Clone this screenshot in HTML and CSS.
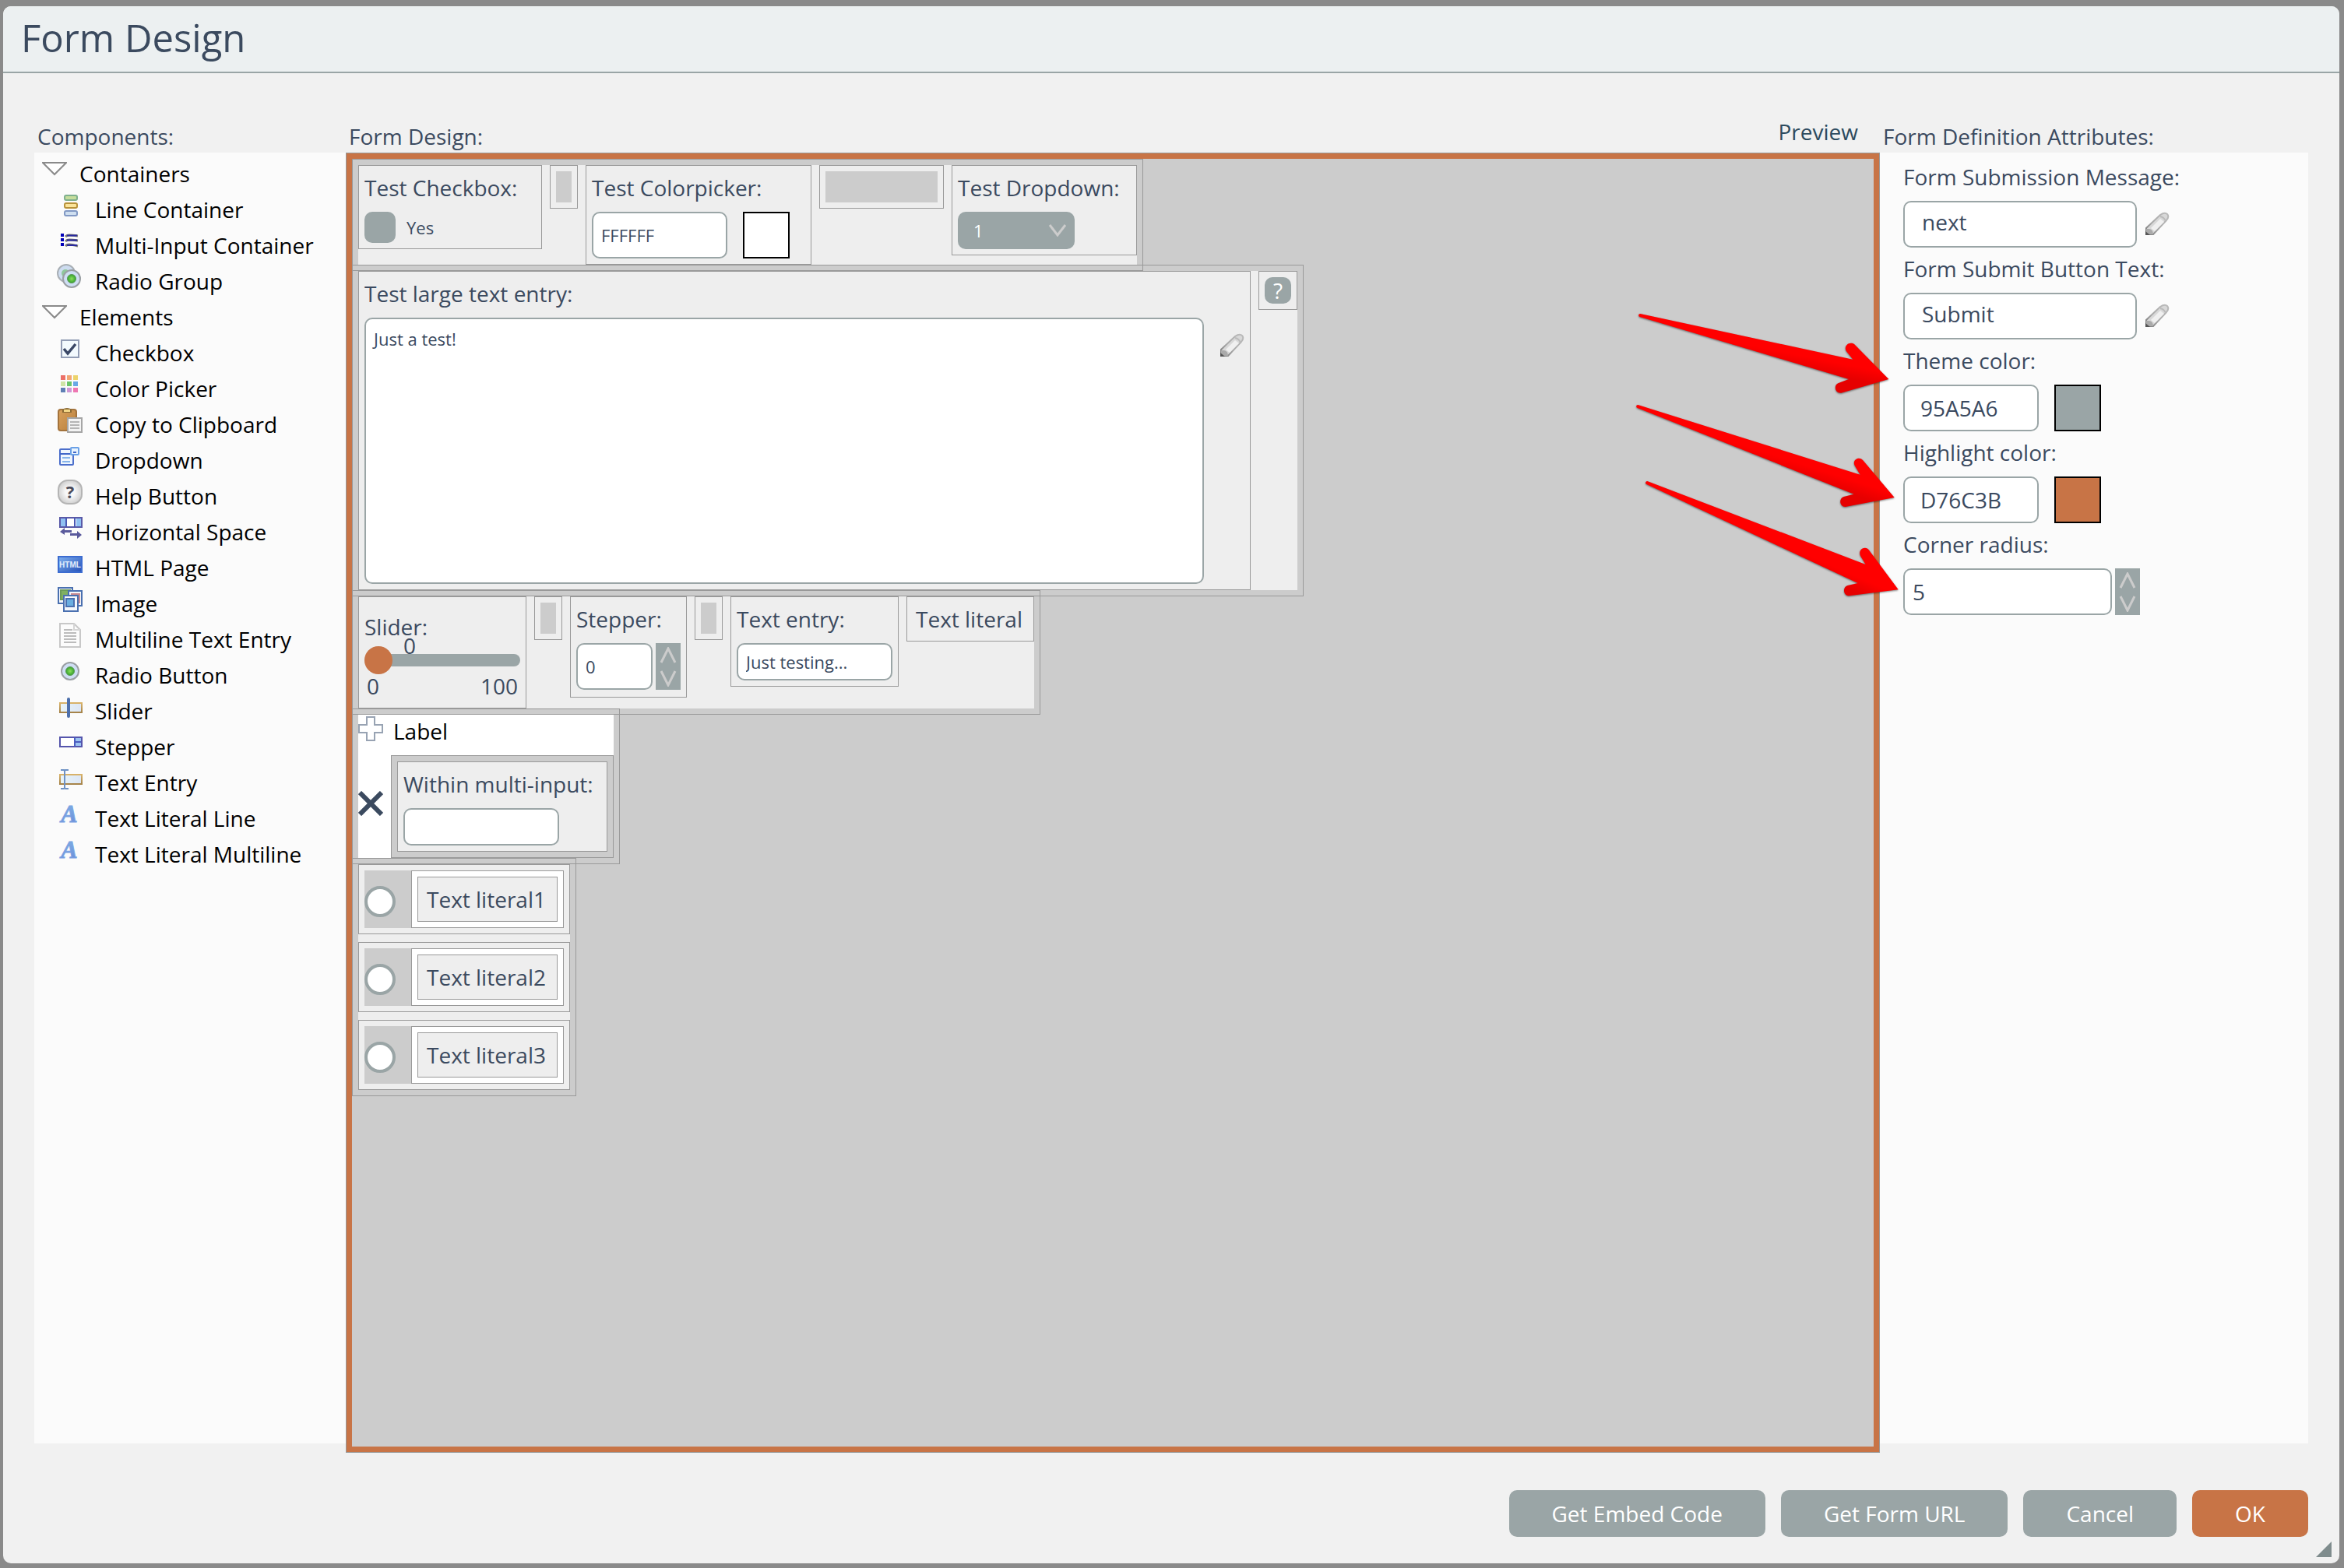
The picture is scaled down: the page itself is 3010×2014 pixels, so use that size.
FILE: index.html
```html
<!DOCTYPE html>
<html lang="en">
<head>
<meta charset="utf-8">
<title>Form Design</title>
<link rel="stylesheet" href="styles.css">
</head>
<body>
<svg class="defs" aria-hidden="true">
  <defs>
    <linearGradient id="tan" x1="0" y1="0" x2="0" y2="1"><stop offset="0" stop-color="#d9b36a"/><stop offset="1" stop-color="#a5834a"/></linearGradient>
    <linearGradient id="ice" x1="0" y1="0" x2="1" y2="0"><stop offset="0" stop-color="#e8f4f8"/><stop offset="1" stop-color="#dce6f6"/></linearGradient>
    <linearGradient id="letter" x1="0" y1="0" x2="0" y2="1"><stop offset="0" stop-color="#7fb4e6"/><stop offset="1" stop-color="#6a8ad8"/></linearGradient>
    <linearGradient id="graphite" x1="0" y1="1" x2="1" y2="0"><stop offset="0" stop-color="#777"/><stop offset="0.4" stop-color="#aaa"/><stop offset="1" stop-color="#bbb"/></linearGradient>
    <linearGradient id="wood" x1="0" y1="0" x2="1" y2="1"><stop offset="0" stop-color="#d9a15c"/><stop offset="1" stop-color="#b87f3c"/></linearGradient>
    <linearGradient id="page" x1="0" y1="0" x2="1" y2="1"><stop offset="0" stop-color="#7fb0ee"/><stop offset="1" stop-color="#2450b8"/></linearGradient>
    <radialGradient id="green"><stop offset="0" stop-color="#8be05c"/><stop offset="1" stop-color="#35a02c"/></radialGradient>
    <radialGradient id="silver"><stop offset="0.4" stop-color="#f8f8f8"/><stop offset="1" stop-color="#d2d2d2"/></radialGradient>
    <symbol id="caret" viewBox="0 0 32 20"><path d="M1 2H31L16 17Z" fill="#fff" stroke="#8a8a8a" stroke-width="2"/></symbol>
    <symbol id="pencil" viewBox="0 0 32 32">
      <path d="M2 29V21L20 4Q26 0 29 3T28 11L11 29Z" fill="#d8d8d8" stroke="url(#graphite)" stroke-width="2"/>
      <path d="M8 21L20 9L25 13L13 25Z" fill="#f0f0f0"/>
      <path d="M2 29V22L6 22Q11 23 11 29Z" fill="#aaa"/><path d="M1 30V25L7 30Z" fill="#555"/>
      <path d="M20 6Q25 7 27 12" fill="none" stroke="#bbb" stroke-width="2"/>
    </symbol>
    <symbol id="up" viewBox="0 0 22 21"><path d="M2 20L11 2L20 20" fill="none" stroke="#ccc" stroke-width="3"/></symbol>
    <symbol id="down" viewBox="0 0 22 21"><path d="M2 1L11 19L20 1" fill="none" stroke="#ccc" stroke-width="3"/></symbol>
  </defs>
</svg>

<main class="dialog">
  <header class="titlebar"><h1>Form Design</h1></header>

  <div class="columns">
    <section class="side">
      <h2 class="heading">Components:</h2>
      <ul class="tree">
        <li class="group"><svg class="caret"><use href="#caret"/></svg>Containers</li>
        <li><svg class="icon" viewBox="0 0 32 32"><g stroke-width="2"><rect x="9" y="3" width="16" height="6" rx="2" fill="#c5dd9c" stroke="#7fb08e"/><rect x="9" y="13" width="16" height="6" rx="2" fill="#fbe49a" stroke="#b8923a"/><rect x="9" y="23" width="16" height="6" rx="2" fill="#cfdff0" stroke="#8299c4"/></g></svg>Line Container</li>
        <li><svg class="icon" viewBox="0 0 32 32"><path d="M4 6h4v4h-4zM4 12h4v4h-4zM4 18h4v4h-4z" fill="#0000b8"/><path d="M10 10Q12 8 15 8T26 9M10 16Q12 14 15 14T26 15M10 22Q12 20 15 20T26 22" fill="none" stroke="#777" stroke-width="3"/><path d="M12 8.5H25M12 14.5H25M12 21H25" stroke="#2a2aa0" stroke-width="2"/></svg>Multi-Input Container</li>
        <li><svg class="icon" viewBox="0 0 32 32"><circle cx="11" cy="11" r="11" fill="#cddcf0" stroke="#a9afb5" stroke-width="2"/><circle cx="10" cy="11" r="5" fill="#8fc79b"/><circle cx="18" cy="18" r="11" fill="#cfdef4" stroke="#9a9fa3" stroke-width="2"/><circle cx="18" cy="18" r="5.5" fill="url(#green)" stroke="#5a9a58"/></svg>Radio Group</li>
        <li class="group"><svg class="caret"><use href="#caret"/></svg>Elements</li>
        <li><svg class="icon" viewBox="0 0 32 32"><rect x="5" y="5" width="22" height="22" fill="#f3fafe" stroke="#929db5" stroke-width="2"/><path d="M8 16L13 22L23 10" fill="none" stroke="#3a4766" stroke-width="3.5"/></svg>Checkbox</li>
        <li><svg class="icon" viewBox="0 0 32 32"><path d="M4 4h6v6h-6z" fill="#ec7068"/><path d="M12 4h6v6h-6z" fill="#f2a673"/><path d="M20 4h6v6h-6z" fill="#ecd36c"/><path d="M4 12h6v6h-6z" fill="#cfe4a6"/><path d="M12 12h6v6h-6z" fill="#6cc46a"/><path d="M20 12h6v6h-6z" fill="#68a8e6"/><path d="M4 20h6v6h-6z" fill="#5f7fb4"/><path d="M12 20h6v6h-6z" fill="#cf98d6"/><path d="M20 20h6v6h-6z" fill="#ee77b2"/></svg>Color Picker</li>
        <li><svg class="icon" viewBox="0 0 32 32"><rect x="1" y="2" width="23" height="27" rx="3" fill="url(#wood)" stroke="#a3733c" stroke-width="2"/><path d="M6 6V2Q12 -2 18 2V6Z" fill="#8a6a34"/><rect x="8" y="2" width="8" height="3" fill="#f5d98a"/><rect x="13" y="13" width="18" height="18" fill="#f3f3f3" stroke="#a5a5a5" stroke-width="2"/><path d="M16 18H28M16 22H28M16 26H28" stroke="#b5b5b5" stroke-width="2"/></svg>Copy to Clipboard</li>
        <li><svg class="icon" viewBox="0 0 32 32"><rect x="3" y="7" width="17" height="20" rx="1" fill="#eef5fd" stroke="#4c6fcb" stroke-width="2"/><path d="M3 13H20" stroke="#3f66c9" stroke-width="2"/><path d="M6 18H16M6 23H16" stroke="#86b4ea" stroke-width="2"/><rect x="17" y="5" width="10" height="9" rx="1" fill="#e8f3fd" stroke="#6aa0e6" stroke-width="2"/><path d="M20 11H24" stroke="#3f66c9" stroke-width="2"/></svg>Dropdown</li>
        <li><svg class="icon" viewBox="0 0 32 32"><rect x="1" y="1" width="30" height="30" rx="12" fill="url(#silver)" stroke="#b4b4b4" stroke-width="2"/><text x="16" y="24" text-anchor="middle" class="glyph-help">?</text></svg>Help Button</li>
        <li><svg class="icon" viewBox="0 0 32 32"><rect x="3" y="3" width="28" height="12" fill="#fff" stroke="#5a5aa8" stroke-width="2"/><path d="M4 4h6v10h-6zM24 4h6v10h-6z" fill="#8fc0f2"/><path d="M11 3V15M22 3V15" stroke="#4a58b4" stroke-width="2"/><path d="M3 21L9 16V19H18V22H9V25ZM31 25L25 20V23H16V26H25V30Z" fill="#5a5a9c"/></svg>Horizontal Space</li>
        <li><svg class="icon" viewBox="0 0 32 32"><rect x="1" y="7" width="30" height="20" fill="url(#page)" stroke="#3c6cd0" stroke-width="2"/><text x="16" y="21" text-anchor="middle" class="glyph-html">HTML</text></svg>HTML Page</li>
        <li><svg class="icon" viewBox="0 0 32 32"><g stroke-width="2" fill="#f4f7fb" stroke="#4a70b0"><rect x="1" y="1" width="18" height="20"/><rect x="4" y="4" width="12" height="12" fill="#7fb062" stroke="#6a9a58"/><rect x="14" y="5" width="17" height="19"/><rect x="18" y="9" width="10" height="11" fill="#e07a72" stroke="#c98a90"/><rect x="8" y="11" width="18" height="20"/><rect x="11" y="15" width="10" height="10" fill="#6aaee0"/></g></svg>Image</li>
        <li><svg class="icon" viewBox="0 0 32 32"><path d="M3 1H21L29 9V31H3Z" fill="#fcfcfc" stroke="#c8c8c8" stroke-width="2"/><path d="M21 1V9H29" fill="none" stroke="#d5d5d5" stroke-width="2"/><path d="M8 9H19M8 13H24M8 17H24M8 21H24M8 25H24" stroke="#bcbcbc" stroke-width="2"/></svg>Multiline Text Entry</li>
        <li><svg class="icon" viewBox="0 0 32 32"><circle cx="16" cy="16" r="11" fill="#cfdef4" stroke="#9a9fa3" stroke-width="2"/><circle cx="16" cy="16" r="5.5" fill="url(#green)" stroke="#5a9a58"/></svg>Radio Button</li>
        <li><svg class="icon" viewBox="0 0 32 32"><rect x="3" y="11" width="28" height="12" fill="url(#ice)" stroke="url(#tan)" stroke-width="2"/><rect x="12" y="4" width="4" height="26" rx="2" fill="#4d70ac"/></svg>Slider</li>
        <li><svg class="icon" viewBox="0 0 32 32"><rect x="3" y="9" width="28" height="12" fill="#fff" stroke="#5555ac" stroke-width="2"/><rect x="22" y="10" width="8" height="10" fill="#9cc2f0"/><path d="M22 9V21M22 15H30" stroke="#4c5cc0" stroke-width="2"/></svg>Stepper</li>
        <li><svg class="icon" viewBox="0 0 32 32"><rect x="3" y="11" width="28" height="12" fill="url(#ice)" stroke="url(#tan)" stroke-width="2"/><path d="M4 5H8L9 6L10 5H14M9 6V28M4 29H8L9 28L10 29H14" fill="none" stroke="#6f92c4" stroke-width="2"/></svg>Text Entry</li>
        <li><svg class="icon" viewBox="0 0 32 32"><text x="15" y="26" text-anchor="middle" class="glyph-letter">A</text></svg>Text Literal Line</li>
        <li><svg class="icon" viewBox="0 0 32 32"><text x="15" y="26" text-anchor="middle" class="glyph-letter">A</text></svg>Text Literal Multiline</li>
      </ul>
    </section>

    <section class="workspace">
      <div class="workspace-head">
        <h2 class="heading">Form Design:</h2>
        <a class="preview" href="#preview">Preview</a>
      </div>
      <div class="canvas">
        <div class="row"><div class="line">
          <div class="item w-checkbox">
            <span class="label">Test Checkbox:</span>
            <label class="check"><input type="checkbox">Yes</label>
          </div>
          <div class="item"><div class="space"></div></div>
          <div class="item w-color">
            <label class="label" for="color">Test Colorpicker:</label>
            <div class="color"><input id="color" class="box small tall" value="FFFFFF"><button class="swatch white" aria-label="Pick color"></button></div>
          </div>
          <div class="item"><div class="space wide"></div></div>
          <div class="item w-dropdown">
            <label class="label" for="drop">Test Dropdown:</label>
            <div class="drop"><select id="drop"><option>1</option></select><svg viewBox="0 0 24 16"><path d="M2 1L12 14L22 1" fill="none" stroke="#ccc" stroke-width="3"/></svg></div>
          </div>
        </div></div>

        <div class="row"><div class="line">
          <div class="item w-large">
            <label class="label" for="large">Test large text entry:</label>
            <div class="large"><textarea id="large" class="box small">Just a test!</textarea><button class="edit" aria-label="Edit"><svg><use href="#pencil"/></svg></button></div>
          </div>
          <div class="item"><button class="help">?</button></div>
        </div></div>

        <div class="row"><div class="line">
          <div class="item w-slider">
            <label class="label low" for="slide">Slider:</label>
            <output class="value" for="slide">0</output>
            <input id="slide" type="range" min="0" max="100" value="0">
            <div class="scale"><span>0</span><span>100</span></div>
          </div>
          <div class="item"><div class="space"></div></div>
          <div class="item w-stepper">
            <label class="label" for="step">Stepper:</label>
            <div class="stepper"><input id="step" class="box small tall" value="0"><div class="spin"><button aria-label="Increase"><svg><use href="#up"/></svg></button><button aria-label="Decrease"><svg><use href="#down"/></svg></button></div></div>
          </div>
          <div class="item"><div class="space"></div></div>
          <div class="item w-entry">
            <label class="label" for="entry">Text entry:</label>
            <input id="entry" class="box small entry" value="Just testing...">
          </div>
          <div class="item literal w-literal">Text literal</div>
        </div></div>

        <div class="row"><div class="multi">
          <div class="multi-head"><button class="glyph" aria-label="Add"><svg viewBox="0 0 32 32"><path d="M11 1H21V11H31V21H21V31H11V21H1V11H11Z" fill="#fff" stroke="#98a3b3" stroke-width="2"/></svg></button>Label</div>
          <div class="multi-body">
            <button class="glyph" aria-label="Remove"><svg viewBox="0 0 32 32"><path d="M2 2L30 30M30 2L2 30" stroke="#3b4a5f" stroke-width="6"/></svg></button>
            <div class="frame"><div class="item w-within">
              <label class="label" for="within">Within multi-input:</label>
              <input id="within" class="box small entry">
            </div></div>
          </div>
        </div></div>

        <div class="row"><div class="radios">
          <label class="item radio"><span class="pick"><input type="radio" name="choice"></span><span class="well"><span class="literal">Text literal1</span></span></label>
          <label class="item radio"><span class="pick"><input type="radio" name="choice"></span><span class="well"><span class="literal">Text literal2</span></span></label>
          <label class="item radio"><span class="pick"><input type="radio" name="choice"></span><span class="well"><span class="literal">Text literal3</span></span></label>
        </div></div>

        <svg class="arrows" viewBox="0 0 1050 1170" aria-hidden="true">
          <defs>
            <linearGradient id="r1" gradientUnits="userSpaceOnUse" x1="560" y1="100" x2="535" y2="225"><stop offset="0.6" stop-color="#f00"/><stop offset="1" stop-color="#e60000"/></linearGradient>
            <linearGradient id="r2" gradientUnits="userSpaceOnUse" x1="560" y1="500" x2="520" y2="625"><stop offset="0.6" stop-color="#f00"/><stop offset="1" stop-color="#e60000"/></linearGradient>
            <linearGradient id="r3" gradientUnits="userSpaceOnUse" x1="560" y1="820" x2="505" y2="945"><stop offset="0.6" stop-color="#f00"/><stop offset="1" stop-color="#e60000"/></linearGradient>
          </defs>
          <path fill="url(#r1)" d="M49 39L868 215L843 184C830 163 855 143 874 157L1006 291L823 344C799 346 793 315 811 307L852 291L47 51C40 48 42 39 49 39Z"/>
          <path fill="url(#r2)" d="M40 390L896 659L875 624C864 602 892 586 907 604L1028 747L839 783C817 783 812 751 833 744L872 734L38 402C31 399 33 390 40 390Z"/>
          <path fill="url(#r3)" d="M76 684L917 1005L897 972C886 947 917 930 931 951L1043 1102L854 1126C831 1126 826 1093 848 1086L887 1077L73 696C67 693 69 684 76 684Z"/>
        </svg>
      </div>
    </section>

    <section class="side">
      <h2 class="heading">Form Definition Attributes:</h2>
      <div class="attributes">
        <label class="label" for="message">Form Submission Message:</label>
        <div class="field"><input id="message" class="box tall rich" value="next"><button class="edit" aria-label="Edit"><svg><use href="#pencil"/></svg></button></div>
        <label class="label" for="submit">Form Submit Button Text:</label>
        <div class="field"><input id="submit" class="box tall rich" value="Submit"><button class="edit" aria-label="Edit"><svg><use href="#pencil"/></svg></button></div>
        <label class="label" for="theme">Theme color:</label>
        <div class="field color"><input id="theme" class="box tall code" value="95A5A6"><button class="swatch theme" aria-label="Pick color"></button></div>
        <label class="label" for="highlight">Highlight color:</label>
        <div class="field color"><input id="highlight" class="box tall code" value="D76C3B"><button class="swatch accent" aria-label="Pick color"></button></div>
        <label class="label" for="radius">Corner radius:</label>
        <div class="field stepper"><input id="radius" class="box tall" value="5"><div class="spin"><button aria-label="Increase"><svg><use href="#up"/></svg></button><button aria-label="Decrease"><svg><use href="#down"/></svg></button></div></div>
      </div>
    </section>
  </div>

  <footer class="actions">
    <button>Get Embed Code</button>
    <button>Get Form URL</button>
    <button>Cancel</button>
    <button class="primary">OK</button>
  </footer>
  <svg class="grip" viewBox="0 0 20 20" aria-hidden="true"><path d="M20 0V20H0Z" fill="#7f8c8d"/></svg>
</main>
</body>
</html>
```
FILE: styles.css
```css
:root {
  --theme: #9aa5a6;
  --accent: #c87446;
  --ink: #3b4a5f;
  --line: #999;
}

* { box-sizing: border-box; }

body {
  margin: 0;
  padding: 8px 6px 6px 4px;
  min-height: 100vh;
  display: flex;
  background: #8a8a8a;
  color: var(--ink);
  font: 28px/42px "Open Sans", "Noto Sans", sans-serif;
}

button, input, select, textarea { font: inherit; color: inherit; margin: 0; }
button { border: 0; padding: 0; background: none; }
h1, h2 { margin: 0; font-weight: 400; }
svg { display: block; }
.defs { position: absolute; width: 0; height: 0; }

.dialog {
  position: relative;
  flex: 1;
  display: flex;
  flex-direction: column;
  background: #f1f1f1;
  border-radius: 10px;
}

.titlebar {
  padding: 6px 23px 10px;
  background: #ecf0f1;
  border-bottom: 2px solid var(--theme);
  border-radius: 10px 10px 0 0;
}
.titlebar h1 { font-size: 49px; line-height: 68px; }

.columns {
  flex: 1;
  display: grid;
  grid-template-columns: 400px 1fr 550px;
  padding: 60px 40px 0;
}

.side, .workspace { display: flex; flex-direction: column; }
.side { padding-bottom: 12px; }
.heading { font-size: 28px; line-height: 42px; padding-left: 4px; }

/* component tree */
.tree {
  flex: 1;
  margin: 0;
  padding: 4px 0 0 30px;
  list-style: none;
  background: #fbfbfb;
  color: #000;
}
.tree li {
  display: flex;
  align-items: flex-start;
  gap: 16px;
  height: 46px;
  line-height: 46px;
}
.tree .group { margin-left: -20px; }
.icon { width: 32px; height: 32px; margin-top: 2px; overflow: visible; }
.caret { width: 32px; height: 20px; margin-top: 7px; }
.glyph-help { font: bold 22px "Open Sans", sans-serif; fill: #4a4a58; }
.glyph-html { font: bold 10px "Liberation Sans", sans-serif; fill: #e4eefc; }
.glyph-letter {
  font: italic bold 32px "Liberation Serif", serif;
  fill: url(#letter);
  stroke: #7aa2e2;
  stroke-width: 1px;
}

/* workspace */
.workspace-head { display: flex; justify-content: space-between; }
.preview {
  margin-right: 28px;
  line-height: 30px;
  color: #2c4a5e;
  text-decoration: none;
}
.canvas {
  position: relative;
  flex: 1;
  display: flex;
  flex-direction: column;
  align-items: flex-start;
  padding: 7px;
  background: #ccc;
  border: 1px solid var(--line);
  box-shadow: inset 0 0 0 7px var(--accent);
}
.arrows {
  position: absolute;
  top: 193px;
  right: -27px;
  width: 350px;
  height: 390px;
  filter: drop-shadow(0 1px 1px rgba(0, 0, 0, 0.5));
}

.row { padding: 7px; border: 1px solid var(--line); }
.row + .row { margin-top: -8px; }
.line { display: flex; align-items: flex-start; gap: 10px; background: #eee; }
.item {
  position: relative;
  padding: 7px;
  border: 1px solid var(--line);
  background: #eee;
}
.w-checkbox { width: 236px; }
.w-color { width: 290px; }
.w-dropdown { width: 238px; }
.w-large { width: 1146px; }
.w-slider, .w-entry { width: 216px; }
.w-stepper { width: 150px; padding-bottom: 9px; }
.w-literal { width: 164px; }
.w-within { width: 270px; }

.label { display: block; margin-bottom: 10px; }
.space { width: 20px; height: 40px; background: #ccc; }
.space.wide { width: 144px; }

.box {
  display: block;
  padding: 0 10px;
  background: #fff;
  border: 2px solid var(--theme);
  border-radius: 10px;
}
.small { font-size: 22px; }
.tall { height: 60px; }
.entry { width: 200px; height: 48px; }

.check { display: flex; align-items: center; gap: 14px; font-size: 22px; line-height: 40px; }
.check input {
  appearance: none;
  width: 40px;
  height: 40px;
  border-radius: 10px;
  background: var(--theme);
}

.color { display: flex; gap: 20px; }
.color .box { width: 174px; }
.swatch { width: 60px; height: 60px; border: 2px solid #000; }
.white { background: #fff; }
.theme { background: var(--theme); }
.accent { background: var(--accent); }

.drop { display: grid; width: 150px; align-items: center; }
.drop > * { grid-area: 1 / 1; }
.drop select {
  appearance: none;
  height: 48px;
  padding: 0 20px;
  border: 0;
  border-radius: 10px;
  background: var(--theme);
  color: #fff;
  font-size: 22px;
}
.drop svg { width: 24px; height: 16px; margin-right: 10px; justify-self: end; pointer-events: none; }

.large { display: flex; gap: 20px; }
.large textarea { width: 1078px; height: 342px; line-height: 30px; padding: 10px; resize: none; }
.edit { width: 32px; height: 32px; }
.edit svg { width: 32px; height: 32px; }
.large .edit { margin-top: 20px; }

.help {
  display: block;
  width: 34px;
  height: 34px;
  border-radius: 10px;
  background: var(--theme);
  color: #fff;
  line-height: 34px;
}

.low { padding-top: 10px; margin-bottom: 4px; }
.value { position: absolute; left: 57px; top: 47px; line-height: 30px; }
.scale { display: flex; justify-content: space-between; padding: 0 3px 6px; line-height: 30px; }
input[type="range"] { appearance: none; display: block; width: 200px; height: 36px; background: none; }
input[type="range"]::-webkit-slider-runnable-track {
  height: 16px;
  border-radius: 8px;
  background: var(--theme);
}
input[type="range"]::-webkit-slider-thumb {
  appearance: none;
  width: 36px;
  height: 36px;
  margin-top: -10px;
  border-radius: 50%;
  background: var(--accent);
}

.stepper { display: flex; gap: 4px; }
.stepper .box { width: 98px; }
.spin { display: flex; flex-direction: column; width: 32px; background: var(--theme); }
.spin button { flex: 1; display: grid; place-items: center; }
.spin svg { width: 22px; height: 21px; }

.literal {
  display: block;
  height: 58px;
  padding: 7px 11px;
  border: 1px solid var(--line);
  background: #eee;
}

.multi { width: 328px; background: #fff; color: #000; }
.multi-head { display: flex; gap: 13px; height: 52px; }
.multi-body { display: flex; gap: 10px; color: var(--ink); }
.glyph, .glyph svg { width: 32px; height: 32px; }
.multi-head .glyph { margin-top: 2px; }
.multi-body .glyph { margin-top: 46px; }
.frame { padding: 7px; border: 1px solid var(--line); background: #ccc; }

.radios { display: flex; flex-direction: column; gap: 10px; background: #eee; }
.radio { display: flex; }
.pick { display: flex; align-items: center; width: 60px; padding-top: 6px; background: #ccc; }
.pick input {
  appearance: none;
  width: 40px;
  height: 40px;
  border: 4px solid var(--theme);
  border-radius: 50%;
  background: #fff;
}
.well { padding: 7px; border: 1px solid var(--line); background: #fff; }
.well .literal { width: 180px; }

/* attributes */
.attributes { flex: 1; padding: 10px 30px; background: #fbfbfb; }
.field { display: flex; margin-bottom: 6px; }
.field .edit { margin: 14px 0 0 10px; }
.field .rich { width: 300px; padding: 0 22px 6px; }
.field .code { padding: 0 20px; }
.field.stepper .box { width: 268px; }

.actions {
  display: flex;
  justify-content: flex-end;
  gap: 20px;
  padding: 48px 40px 34px;
}
.actions button {
  height: 60px;
  padding: 0 55px;
  border-radius: 10px;
  background: var(--theme);
  color: #fff;
}
.actions .primary { background: var(--accent); }
.grip { position: absolute; right: 10px; bottom: 8px; width: 20px; height: 20px; }
```
